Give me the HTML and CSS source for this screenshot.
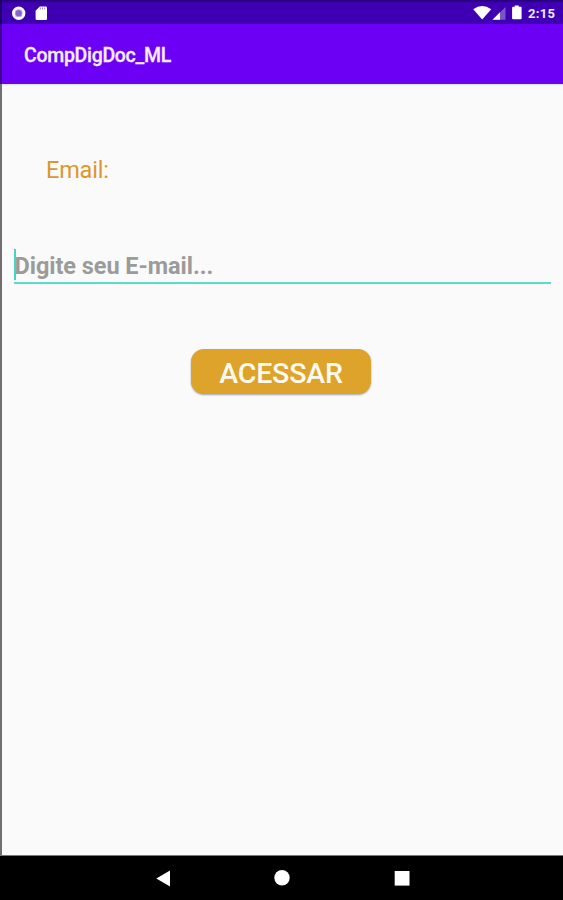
FILE: index.html
```html
<!DOCTYPE html>
<html lang="pt-BR">
<head>
  <meta charset="UTF-8" />
  <meta name="viewport" content="width=device-width, initial-scale=1.0"/>
  <title>CompDigDoc_ML</title>
  <link rel="stylesheet" href="styles.css">
</head>
<body>
  <div class="screen">
    <div class="status-bar">
      <svg class="status-icons" width="60" height="24" viewBox="0 0 60 24">
        <circle cx="18.7" cy="13.2" r="5.3" fill="#b9a2e6" stroke="#fff" stroke-width="2.8"/>
        <circle cx="18.7" cy="13.2" r="3" fill="#8264cc"/>
        <path d="M39.8 6.5h6q1.2 0 1.2 1.2v11q0 1.2-1.2 1.2h-9q-1.2 0-1.2-1.2v-8z" fill="#fff"/>
        <path d="M40.3 7.5v2M42.5 7.5v2M44.7 7.5v2" stroke="#9d82d8" stroke-width="1"/>
      </svg>
      <svg class="status-icons" width="54" height="24" viewBox="470 0 54 24">
        <path d="M473.2 9.2Q482.2 3 491.2 9.2L482.2 19.6z" fill="#fff"/>
        <path d="M505.5 7v12.7H492.5z" fill="#7857c5"/>
        <path d="M500 12.3v7.4H492.5z" fill="#fff"/>
        <path d="M514.8 5.5h4v1.3h1.8q1 0 1 1v10.5q0 1-1 1h-7.5q-1 0-1-1V7.8q0-1 1-1h1.7z" fill="#fff"/>
      </svg>
      <span class="clock">2:15</span>
    </div>
    <header class="app-bar">
      <h1>CompDigDoc_ML</h1>
    </header>
    <main class="content">
      <label class="label" for="email">Email:</label>
      <div class="field">
        <input type="text" id="email" placeholder="Digite seu E-mail..." />
      </div>
      <button class="access">ACESSAR</button>
    </main>
    <nav class="nav-bar">
      <svg width="16" height="18" viewBox="0 0 16 18"><path d="M2.3 9.5L16 1.5v16z" fill="#fff"/></svg>
      <svg width="16" height="18" viewBox="0 0 16 18"><circle cx="8" cy="8.8" r="7.7" fill="#fff"/></svg>
      <svg width="16" height="18" viewBox="0 0 16 18"><rect x="0.7" y="2" width="14.8" height="14.6" fill="#fff"/></svg>
    </nav>
  </div>
</body>
</html>
```
FILE: styles.css
```css
* {
  box-sizing: border-box;
}
body {
  margin: 0;
  font-family: Roboto, sans-serif;
  background: #fafafa;
}
.screen {
  display: flex;
  flex-direction: column;
  height: 900px;
}
.status-bar {
  display: flex;
  height: 24px;
  background: linear-gradient(#250073, #3f00b4 3px);
  border-left: 2px solid #21006b;
}
.status-bar .status-icons:first-child {
  margin-left: -2px;
  margin-right: auto;
}
.clock {
  width: 39px;
  padding-left: 4px;
  font-size: 13px;
  font-weight: 700;
  line-height: 27px;
  letter-spacing: 0.3px;
  color: #f0eaff;
}
.app-bar {
  display: flex;
  align-items: center;
  height: 60px;
  padding: 4px 0 0 22px;
  background: #6c00f5;
  border-left: 2px solid #3b0092;
}
.app-bar h1 {
  margin: 0;
  font-size: 19.5px;
  font-weight: 500;
  line-height: 24px;
  letter-spacing: -0.3px;
  color: #f4ecff;
  -webkit-text-stroke: 0.3px #f4ecff;
}
.content {
  display: flex;
  flex-direction: column;
  flex: 1;
  padding: 71px 12px 0;
  border-left: 2px solid #707070;
  box-shadow: inset 0 2px 2px -1px #dedede;
}
.label {
  margin-left: 32px;
  font-size: 23.5px;
  line-height: 30px;
  letter-spacing: -0.2px;
  color: #dc972d;
}
.field {
  height: 35px;
  margin-top: 64px;
  border-bottom: 2px solid #5edacb;
}
.field input {
  display: block;
  width: 100%;
  height: 31px;
  padding: 2px 0 0;
  border: none;
  border-left: 2px solid #45d5c4;
  outline: none;
  background: transparent;
  font-family: inherit;
  font-size: 23.5px;
  font-weight: 700;
  letter-spacing: -0.05px;
  text-indent: -1.5px;
}
.field input::placeholder {
  color: #9b9b9b;
}
.access {
  align-self: center;
  width: 180px;
  height: 45px;
  margin-top: 65px;
  margin-right: 3px;
  padding: 4px 0 0;
  border: none;
  border-radius: 13px;
  background: #dda32b;
  box-shadow: 0 1px 2px rgba(0,0,0,0.35);
  font-family: inherit;
  font-size: 28.5px;
  font-weight: 500;
  letter-spacing: -0.2px;
  color: #fffaf0;
}
.nav-bar {
  display: flex;
  justify-content: center;
  align-items: center;
  gap: 104px;
  height: 45px;
  background: #000;
  border-top: 1px solid #777;
}
```
